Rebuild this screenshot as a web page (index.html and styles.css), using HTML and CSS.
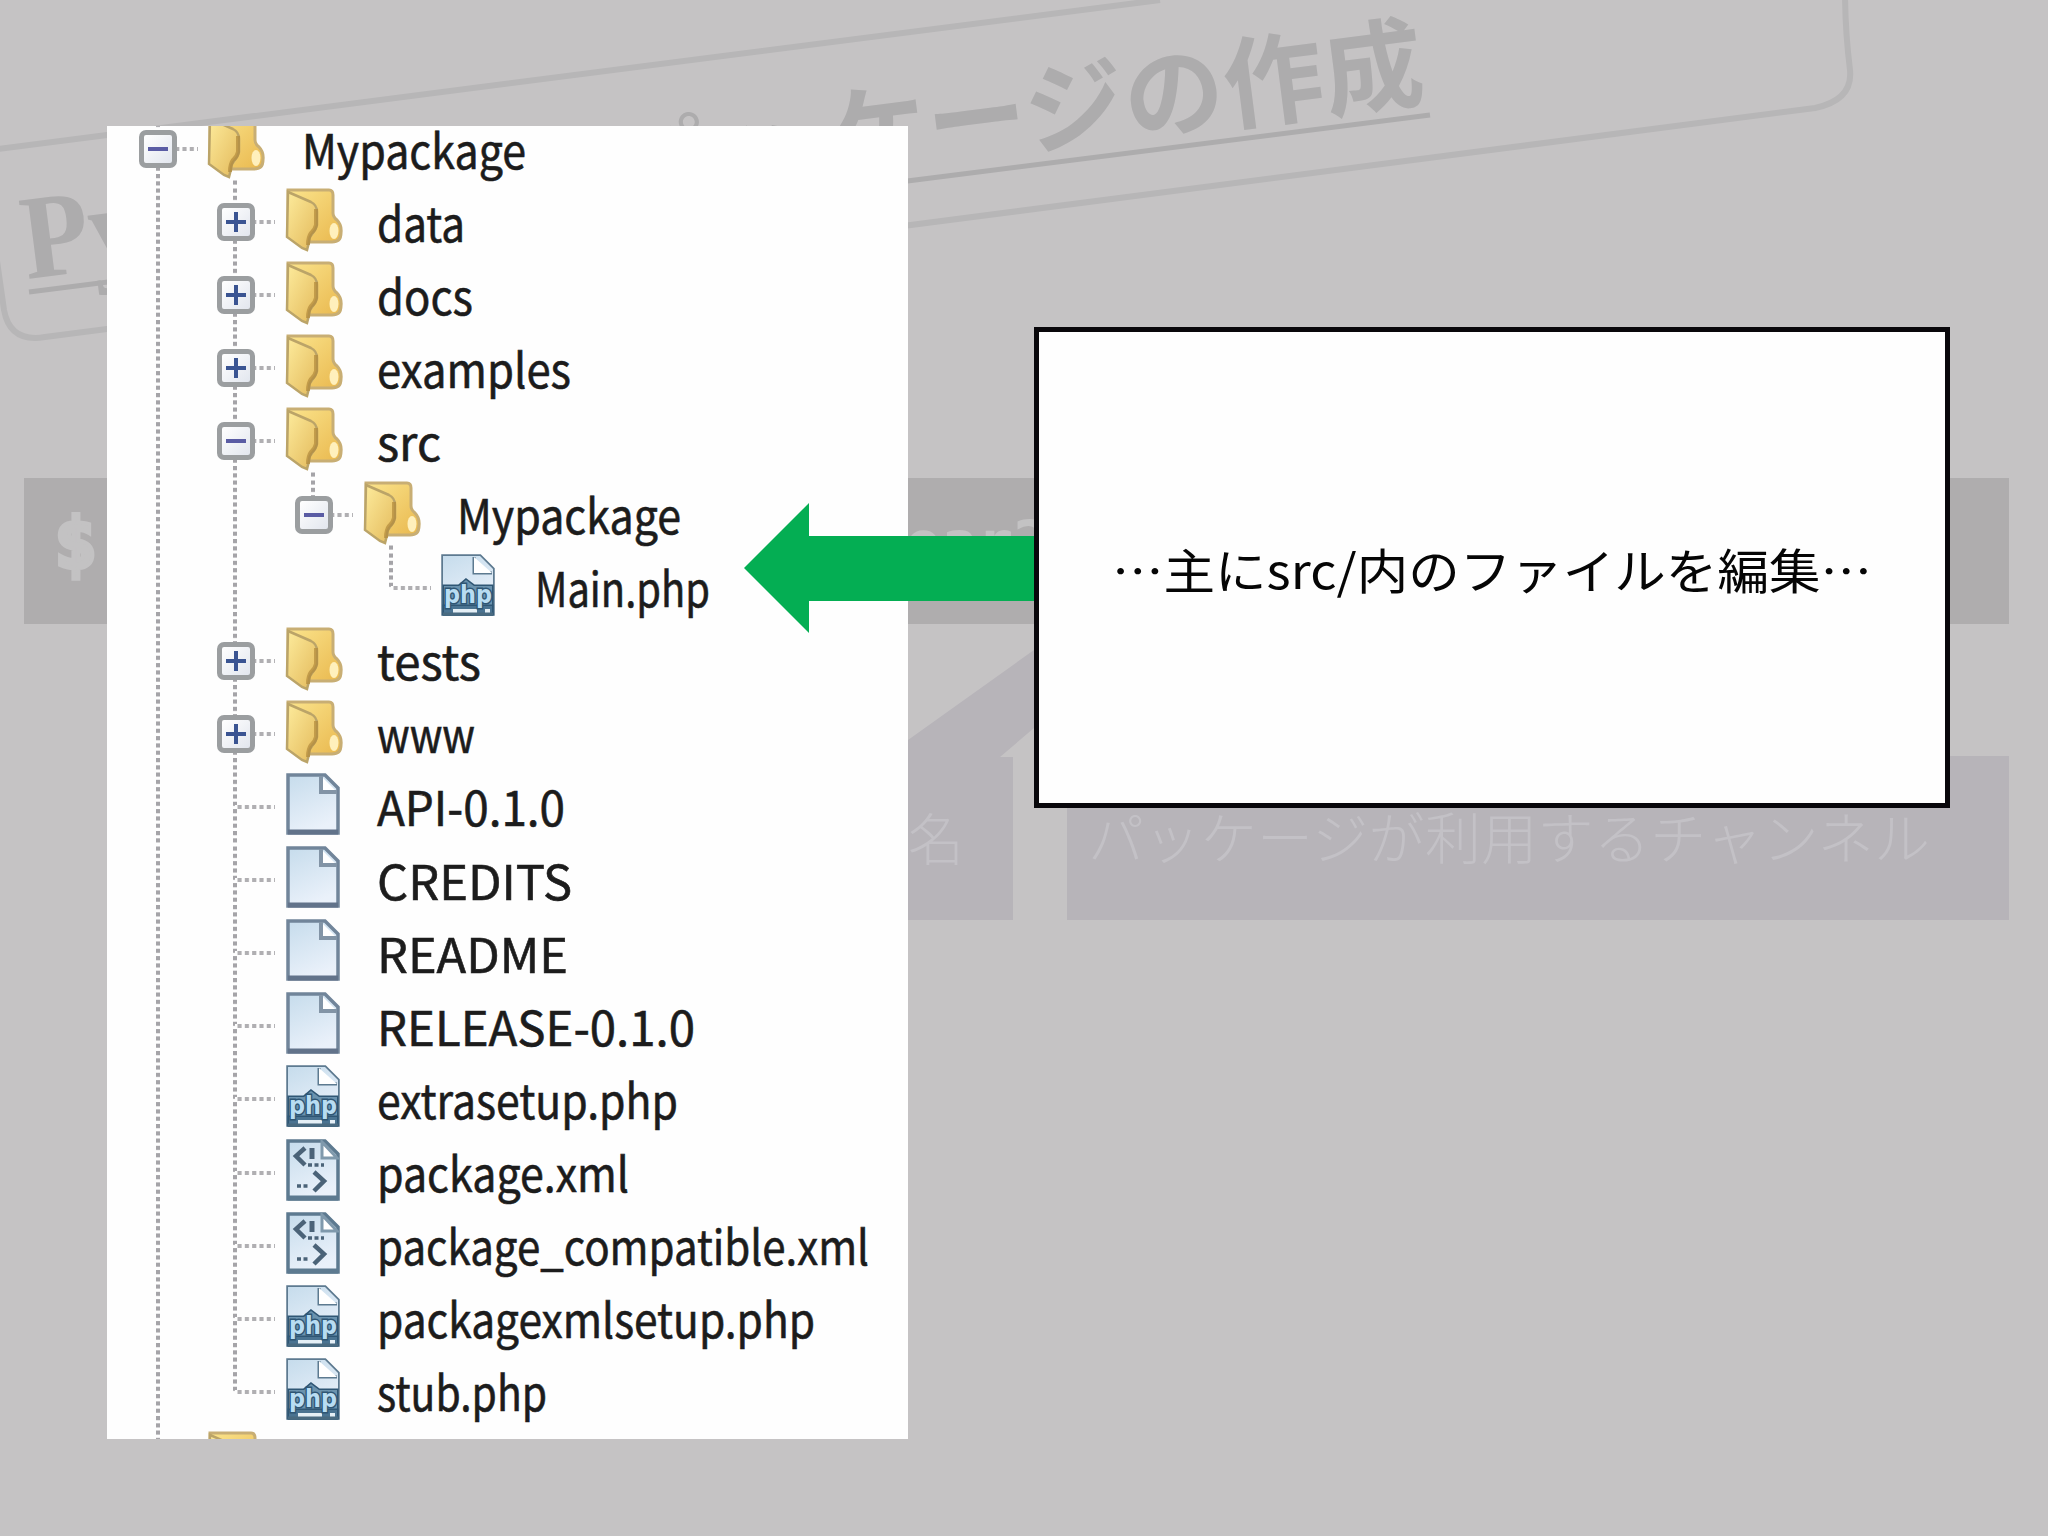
FILE: index.html
```
<!DOCTYPE html>
<html lang="ja">
<head>
    <meta charset="utf-8">
    <title>パッケージの作成</title>
    <link rel="stylesheet" href="styles.css">
</head>
<body>
    <!-- icons -->
    <svg class="defs" width="0" height="0">
        <defs>
            <linearGradient id="gold" x1="0" y1="0" x2="1" y2="1">
                <stop offset="0" stop-color="#fbe48c"/>
                <stop offset="1" stop-color="#e9b84e"/>
            </linearGradient>
            <linearGradient id="leaf" x1="0" y1="0" x2="1" y2="1">
                <stop offset="0" stop-color="#fdeb9c"/>
                <stop offset="1" stop-color="#e3b95a"/>
            </linearGradient>
            <linearGradient id="paper" x1="0" y1="0" x2="0.4" y2="1">
                <stop offset="0" stop-color="#c6dcec"/>
                <stop offset="1" stop-color="#eaf1fa"/>
            </linearGradient>
            <symbol id="folder" viewBox="0 0 58 66">
                <path d="M3 3H44Q48 3 48 8V26Q48 30 52 33Q57 38 56 46Q56 55 47 55H14L3 48Z" fill="url(#gold)" stroke="#c8ae74" stroke-width="3"/>
                <ellipse cx="49" cy="44" rx="4.5" ry="8" fill="#fff0bc"/>
                <path d="M3 5L26 15Q32 18 32 25V38Q31 43 27 47Q24 50 24 55L22 63L17 61L2 50Z" fill="url(#leaf)" stroke="#bba468" stroke-width="2.5"/>
                <path d="M31 22V38Q30 43 26 46Q23 50 23 58" fill="none" stroke="#b28a3c" stroke-width="4" opacity=".7"/>
            </symbol>
            <symbol id="page" viewBox="0 0 54 62">
                <path d="M2 2H39L52 15V60H2Z" fill="url(#paper)" stroke="#71859a" stroke-width="3.5"/>
                <path d="M35 3V19H51" fill="#fff" stroke="#8294a6" stroke-width="4"/>
                <path d="M2 59H52" stroke="#62738a" stroke-width="5"/>
            </symbol>
            <symbol id="php" viewBox="0 0 54 62">
                <path d="M2 2H39L52 15V60H2Z" fill="url(#paper)" stroke="#5d7a90" stroke-width="3.5"/>
                <path d="M33 3V19H51" fill="#fff" stroke="#5d7a90" stroke-width="3"/>
                <path d="M3 32H18L25 26L33 32H51V60H3Z" fill="#6c93ae"/>
                <path d="M3 52H51V60H3Z" fill="#4a7391"/>
                <path d="M12 57H36M44 57H49" stroke="#e4eff6" stroke-width="4"/>
                <text class="php" x="3" y="49" textLength="48" lengthAdjust="spacingAndGlyphs">php</text>
                <path d="M2 60H52" stroke="#496a80" stroke-width="3"/>
            </symbol>
            <symbol id="xml" viewBox="0 0 54 62">
                <path d="M2 2H39L52 15V60H2Z" fill="url(#paper)" stroke="#5d7a90" stroke-width="3.5"/>
                <path d="M36 3V19H51Z" fill="#fff" stroke="#7f99ac" stroke-width="3"/>
                <path d="M19 9L10 17L19 26M28 33L38 42L28 52" fill="none" stroke="#4b6378" stroke-width="4.5"/>
                <path d="M26 9V20" stroke="#4b6378" stroke-width="5"/>
                <path d="M22 26H38M11 47H24" stroke="#4b6378" stroke-width="3.5" stroke-dasharray="4 2.5"/>
                <path d="M2 59H52" stroke="#5d7a90" stroke-width="5"/>
            </symbol>
        </defs>
    </svg>

    <!-- dimmed slide behind -->
    <svg class="back" viewBox="0 0 2048 1536">
        <path class="frame" d="M-10 150L1160 0M1845 -10Q1845 30 1850 70Q1853 100 1815 108L45 337Q10 343 4 310L-6 240"/>
        <path class="underline" d="M29 292L1430 115"/>
        <g class="title">
            <text x="27" y="279" transform="rotate(-7.3 27 279)" textLength="122" lengthAdjust="spacingAndGlyphs">Py</text>
            <text class="jp small" x="621" y="194" transform="rotate(-7.3 621 194)">パッ</text>
            <text class="jp" x="832" y="174" transform="rotate(-7.3 832 174)" textLength="600" lengthAdjust="spacing">ケージの作成</text>
        </g>
        <rect class="bar" x="24" y="478" width="1985" height="146"/>
        <text class="command dollar" x="54" y="568">$</text>
        <text class="command" x="905" y="564">ear2</text>
        <path class="note" d="M880 760L1034 650V728L1000 757H1013V920H800V760ZM1067 756H2009V920H1067Z"/>
        <text class="note-text" x="908" y="860">名</text>
        <text class="note-text" x="1088" y="859" textLength="842">パッケージが利用するチャンネル</text>
    </svg>

    <main class="slide">
        <div class="tree" id="tree"></div>
        <svg class="arrow" viewBox="0 0 290 130">
            <path d="M0 65L65 0V33H290V98H65V130Z" fill="#04ae53"/>
        </svg>
        <div class="callout">
            <svg class="message" viewBox="0 0 780 120">
                <text x="10" y="81" textLength="760" lengthAdjust="spacingAndGlyphs">…主にsrc/内のファイルを編集…</text>
            </svg>
        </div>
    </main>

    <script>
        // icon, depth, expander, label, label width, guide cells
        // guides: f - full line, h - line to the middle, e - empty
        const rows = [
            ['folder', 0, '-', 'Mypackage', 224, 'f'],
            ['folder', 1, '+', 'data', 88, 'ff'],
            ['folder', 1, '+', 'docs', 96, 'ff'],
            ['folder', 1, '+', 'examples', 194, 'ff'],
            ['folder', 1, '-', 'src', 64, 'ff'],
            ['folder', 2, '-', 'Mypackage', 224, 'ffh'],
            ['php', 3, '', 'Main.php', 175, 'ffeh'],
            ['folder', 1, '+', 'tests', 104, 'ff'],
            ['folder', 1, '+', 'www', 98, 'ff'],
            ['page', 1, '', 'API-0.1.0', 188, 'ff'],
            ['page', 1, '', 'CREDITS', 195, 'ff'],
            ['page', 1, '', 'README', 191, 'ff'],
            ['page', 1, '', 'RELEASE-0.1.0', 318, 'ff'],
            ['php', 1, '', 'extrasetup.php', 301, 'ff'],
            ['xml', 1, '', 'package.xml', 252, 'ff'],
            ['xml', 1, '', 'package_compatible.xml', 492, 'ff'],
            ['php', 1, '', 'packagexmlsetup.php', 438, 'ff'],
            ['php', 1, '', 'stub.php', 170, 'fh'],
            ['folder', 0, '', '', 0, 'f']
        ];
        const names = { f: 'full', h: 'half', e: 'none' };
        let html = '';
        rows.forEach(([icon, depth, box, label, width, guides]) => {
            html += '<div class="row">';
            for (let i = 0; i <= depth; i++) {
                html += '<div class="cell ' + names[guides[i]] + '">';
                if (i == depth && label) {
                    html += '<span class="dots"></span>';
                    if (box) html += '<span class="box ' + (box == '+' ? 'plus' : '') + '"></span>';
                }
                html += '</div>';
            }
            html += '<div class="cell ' + (box == '-' ? 'below' : '') + '"><svg class="icon ' + icon + '"><use href="#' + icon + '"/></svg></div>';
            if (label) {
                html += '<svg class="label' + (depth == 1 ? '' : ' wide') + '" width="' + (width + 8) + '" height="73"><text x="0" y="56" textLength="' + width + '" lengthAdjust="spacingAndGlyphs">' + label + '</text></svg>';
            }
            html += '</div>';
        });
        document.getElementById('tree').innerHTML = html;
    </script>
</body>
</html>
```
FILE: styles.css
```
body {
    margin: 0;
    width: 2048px;
    height: 1536px;
    overflow: hidden;
    position: relative;
    background-color: #c5c3c4;
    font-family: "Noto Sans CJK JP", sans-serif;
}
.defs {
    position: absolute;
}
.back {
    position: absolute;
    left: 0;
    top: 0;
    width: 2048px;
    height: 1536px;
}
.frame {
    fill: none;
    stroke: #b7b6b7;
    stroke-width: 6px;
}
.underline {
    fill: none;
    stroke: #adacad;
    stroke-width: 5px;
}
.title {
    fill: #adacad;
    font-family: "Liberation Serif", "Noto Sans CJK JP", serif;
    font-weight: bold;
    font-size: 120px;
}
.title .jp {
    font-size: 100px;
}
.title .small {
    font-size: 90px;
    font-weight: normal;
}
.bar {
    fill: #afadae;
}
.command {
    fill: #c3c2c3;
    font-family: "DejaVu Sans Mono", monospace;
    font-weight: bold;
    font-size: 60px;
}
.dollar {
    font-size: 72px;
    stroke: #c3c2c3;
    stroke-width: 4px;
}
.note {
    fill: #b7b4b9;
}
.note-text {
    fill: #c3c1c6;
    font-size: 56px;
    font-weight: 300;
}
.slide {
    position: relative;
    display: flex;
    align-items: flex-start;
    padding-left: 107px;
}
.tree {
    width: 789px;
    height: 1313px;
    margin-top: 126px;
    padding-left: 12px;
    flex: none;
    overflow: hidden;
    background-color: #fefefe;
}
.row {
    display: flex;
    height: 73.12px;
}
.row:first-child {
    margin-top: -13.5px;
}
.cell {
    width: 77.6px;
    height: 73.12px;
    flex: none;
    display: grid;
    align-items: center;
    justify-items: center;
    background-repeat: no-repeat;
    background-position: center top;
}
.cell > * {
    grid-area: 1 / 1;
}
.full, .half {
    background-image: repeating-linear-gradient(#fefefe 0 2px, #a5a4a8 3px 6px, #fefefe 7.312px);
    background-size: 4px 100%;
}
.half {
    background-size: 4px 38px;
}
.below {
    background-image: repeating-linear-gradient(#fefefe 0 2px, #a5a4a8 3px 6px, #fefefe 7.312px);
    background-size: 4px 8px;
    background-position: center bottom;
}
.dots {
    width: 40px;
    height: 4px;
    justify-self: start;
    margin-left: 38.8px;
    background-image: repeating-linear-gradient(90deg, #fefefe 0 2px, #b0afb2 3px 6px, #fefefe 7.312px);
}
.box {
    box-sizing: border-box;
    width: 38px;
    height: 38px;
    border: 5px solid #9b9ea0;
    border-radius: 7px;
    background: linear-gradient(#5a5ca4, #5a5ca4) center / 20px 4px no-repeat, linear-gradient(135deg, #fff, #e2e6ee);
}
.plus {
    background: linear-gradient(#3a5492, #3a5492) center / 20px 4px no-repeat, linear-gradient(#3a5492, #3a5492) center / 4px 20px no-repeat, linear-gradient(135deg, #fff, #e2e6ee);
}
.icon {
    width: 54px;
    height: 62px;
    position: relative;
    top: -3px;
}
.folder {
    width: 58px;
    height: 66px;
    top: -2px;
    left: 1px;
}
.php {
    font-family: "DejaVu Sans", sans-serif;
    font-weight: bold;
    font-size: 24px;
    fill: #b8dcf2;
    stroke: #2f5674;
    stroke-width: 3px;
    paint-order: stroke;
}
.label {
    margin-left: 25px;
    overflow: visible;
    font-size: 48px;
    fill: #1c1c1c;
    stroke: #1c1c1c;
    stroke-width: .6px;
}
.wide {
    margin-left: 28px;
}
.arrow {
    width: 290px;
    height: 130px;
    flex: none;
    margin: 503px 0 0 -164px;
}
.callout {
    box-sizing: border-box;
    width: 916px;
    height: 481px;
    margin-top: 327px;
    border: 5px solid #09070b;
    background-color: #fefefe;
    display: flex;
    align-items: center;
    justify-content: center;
    flex: none;
}
.message {
    width: 780px;
    height: 120px;
    font-size: 48px;
    fill: #050505;
}
```
